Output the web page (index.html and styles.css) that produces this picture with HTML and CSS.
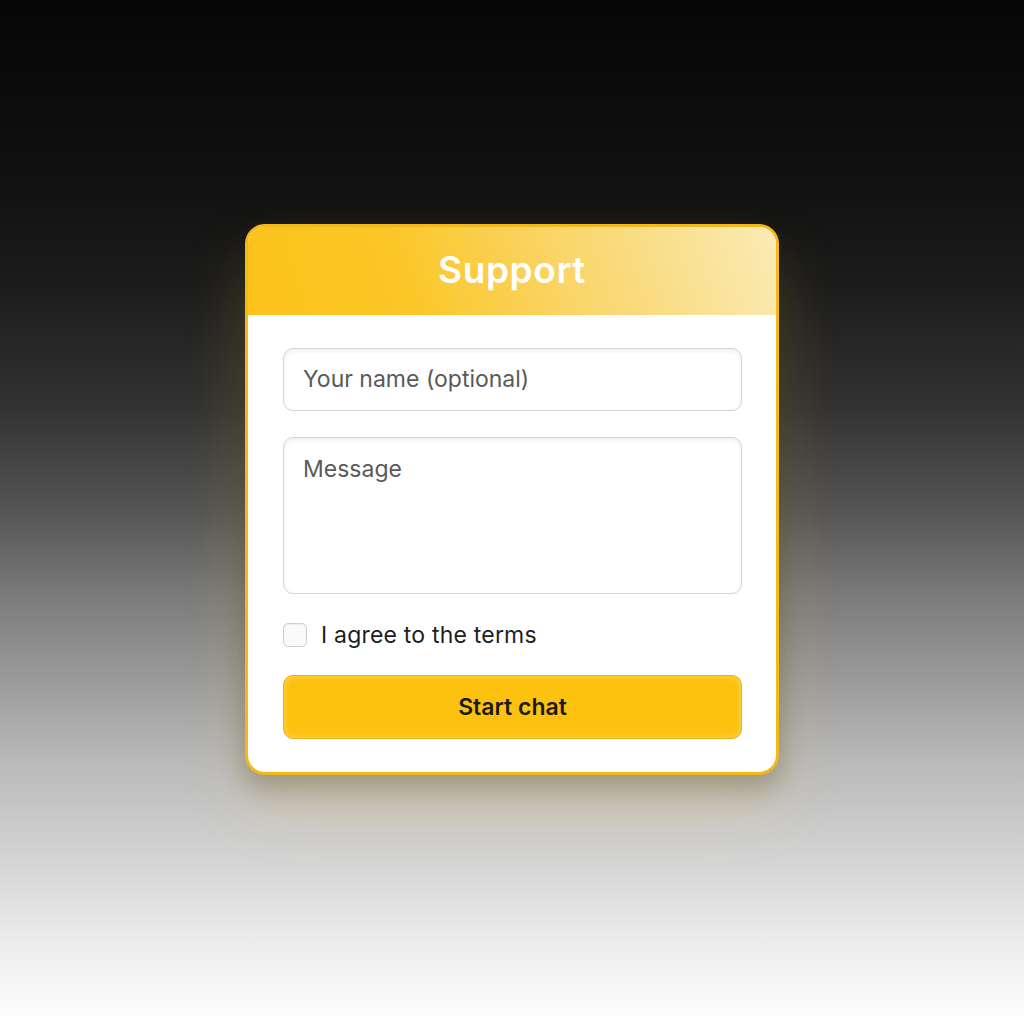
FILE: index.html
```html
<!DOCTYPE html>
<html lang="en">
<head>
<meta charset="utf-8">
<title>Support</title>
<link rel="stylesheet" href="styles.css">
</head>
<body>
<main class="stage">
  <section class="card">
    <header class="card-head">
      <h1 class="title">Support</h1>
    </header>
    <form class="card-body">
      <input class="field" type="text" placeholder="Your name (optional)">
      <textarea class="field area" placeholder="Message"></textarea>
      <label class="agree">
        <span class="box"></span>
        <span class="agree-text">I agree to the terms</span>
      </label>
      <button class="btn" type="button">Start chat</button>
    </form>
  </section>
</main>
</body>
</html>
```

FILE: styles.css
```css
* { box-sizing: border-box; }
html, body { margin: 0; padding: 0; }
body {
  width: 1024px;
  height: 1024px;
  font-family: Inter, "Noto Sans", "Liberation Sans", sans-serif;
  background: linear-gradient(to bottom,
    #060606 0%, #111111 18%, #1c1c1c 28%, #333333 40%, #555555 50%,
    #7a7a7a 58%, #999999 66%, #b8b8b8 74%, #d4d4d4 84%, #ececec 92%, #ffffff 100%);
}
.stage {
  height: 1024px;
  display: flex;
  align-items: center;
  justify-content: center;
  padding-bottom: 26px;
}
.card {
  width: 534px;
  height: 551px;
  border: 3px solid #f2b91f;
  border-radius: 20px;
  background: #ffffff;
  overflow: hidden;
  display: flex;
  flex-direction: column;
  box-shadow: 0 30px 60px rgba(240, 200, 70, 0.22), 0 12px 28px rgba(0, 0, 0, 0.28);
}
.card-head {
  height: 88px;
  flex: none;
  display: flex;
  align-items: center;
  justify-content: center;
  background: linear-gradient(72deg, #fbc21a 0%, #fbc727 30%, #fad465 58%, #f9df8c 78%, #fbebb5 100%);
}
.title {
  margin: 0;
  color: #ffffff;
  font-size: 37px;
  font-weight: 600;
  letter-spacing: 0.6px;
  padding-bottom: 2px;
}
.card-body {
  flex: 1;
  margin: 0;
  padding: 33px 34px 0 35px;
  display: flex;
  flex-direction: column;
}
.field {
  display: block;
  width: 100%;
  height: 63px;
  border: 1.5px solid #d3d3d3;
  border-radius: 10px;
  background: #ffffff;
  padding: 0 19px;
  font-family: inherit;
  font-size: 23px;
  color: #333;
  outline: none;
  box-shadow: inset 0 2px 5px rgba(0, 0, 0, 0.07);
}
.field::placeholder { color: #5a5a5a; opacity: 1; }
.area {
  margin-top: 26px;
  height: 157px;
  padding: 16px 19px;
  resize: none;
  line-height: 30px;
}
.agree {
  margin-top: 29px;
  display: flex;
  align-items: center;
  gap: 14px;
  height: 25px;
}
.box {
  width: 24px;
  height: 24px;
  flex: none;
  border: 1.5px solid #cfcfcf;
  border-radius: 5px;
  background: #fafafa;
  box-shadow: inset 0 1px 2px rgba(0,0,0,0.06);
}
.agree-text {
  font-size: 23px;
  letter-spacing: 0.2px;
  color: #1e1e1e;
}
.btn {
  margin-top: 27px;
  width: 100%;
  height: 64px;
  border: 1.5px solid #e7b21e;
  border-radius: 10px;
  background: #fdc20f;
  font-family: inherit;
  font-size: 23px;
  font-weight: 600;
  color: #1c1a14;
  box-shadow: inset 0 0 6px rgba(255, 235, 150, 0.6);
  cursor: pointer;
}
```
